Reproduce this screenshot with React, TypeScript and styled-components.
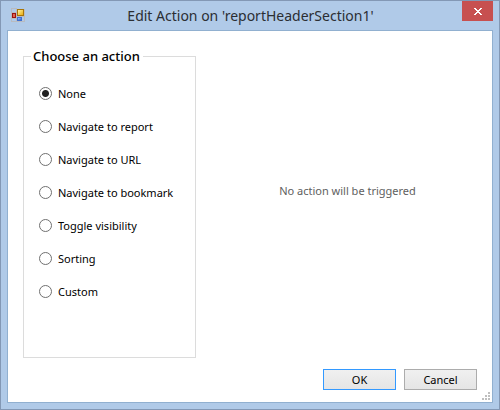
import React, { useState } from "react";
import styled, { createGlobalStyle } from "styled-components";

const GlobalStyle = createGlobalStyle`
  *, *::before, *::after { box-sizing: border-box; }
  body {
    margin: 0;
    color: #000;
    font: 11px/16px "Noto Sans", "Open Sans", sans-serif;
  }
`;

const Window = styled.div`
  display: flex;
  flex-direction: column;
  min-height: 100vh;
  padding: 0 6px 6px;
  border: 1px solid #8398b5;
  background: #b0cae8;
`;

const TitleBar = styled.header`
  display: grid;
  grid-template-columns: 32px 1fr 31px;
  align-items: start;
  height: 29px;
`;

const AppIcon = styled.svg`
  display: block;
  width: 14px;
  height: 14px;
  margin: 7px 0 0 4px;
`;

const Title = styled.h1`
  margin: 0;
  color: #2b2e33;
  font-size: 14px;
  font-weight: 400;
  line-height: 29px;
  text-align: center;
  white-space: nowrap;
`;

const CloseButton = styled.button`
  display: flex;
  align-items: center;
  justify-content: center;
  width: 31px;
  height: 20px;
  padding: 0;
  border: 0;
  background: #c75050;
`;

const Content = styled.form`
  position: relative;
  display: flex;
  flex: 1;
  flex-direction: column;
  gap: 11px;
  padding: 15px 15px 12px;
  border: 1px solid #91b0d0;
  background: #fff;
`;

const Panels = styled.main`
  display: flex;
  flex: 1;
  gap: 22px;
`;

const ActionGroup = styled.fieldset`
  flex: 0 0 173px;
  min-width: 0;
  margin: 0;
  padding: 11px 15px;
  border: 1px solid #dcdcdc;
`;

const Legend = styled.legend`
  margin-left: -8px;
  padding: 0 3px 0 2px;
  font-size: 13px;
  font-weight: 500;
  line-height: 20px;
`;

const Option = styled.label`
  display: flex;
  align-items: center;
  gap: 6px;
  height: 33px;
  white-space: nowrap;
`;

const Radio = styled.input`
  flex: none;
  appearance: none;
  width: 13px;
  height: 13px;
  margin: 0;
  border: 1px solid #707070;
  border-radius: 50%;
  background: #fff;

  &:checked {
    background: radial-gradient(circle, #212121 3px, #fff 4px);
  }
`;

const Message = styled.p`
  display: flex;
  flex: 1;
  align-items: center;
  justify-content: center;
  margin: 0;
  padding-bottom: 22px;
  color: #606060;
`;

const Footer = styled.footer`
  display: flex;
  justify-content: flex-end;
  gap: 8px;
`;

const DialogButton = styled.button<{ $primary?: boolean }>`
  width: 73px;
  height: 21px;
  padding: 0;
  border: 1px solid ${(p) => (p.$primary ? "#3399ff" : "#acacac")};
  background: linear-gradient(#f0f0f0, #e5e5e5);
  color: #000;
  font: inherit;
`;

const ResizeGrip = styled.svg`
  position: absolute;
  right: 2px;
  bottom: 2px;
  width: 8px;
  height: 8px;
  fill: #bfbfbf;
`;

const actions = [
  "None",
  "Navigate to report",
  "Navigate to URL",
  "Navigate to bookmark",
  "Toggle visibility",
  "Sorting",
  "Custom",
];

export default function App() {
  const [selected, setSelected] = useState("None");

  return (
    <>
      <GlobalStyle />
      <Window>
        <TitleBar>
          <AppIcon viewBox="0 0 14 14" shapeRendering="crispEdges" aria-hidden="true">
            <defs>
              <linearGradient id="gold" x1="0" y1="0" x2="1" y2="1">
                <stop offset="0" stopColor="#fff3a0" />
                <stop offset="1" stopColor="#e8ac10" />
              </linearGradient>
              <linearGradient id="blue" x1="0" y1="0" x2="1" y2="1">
                <stop offset="0" stopColor="#9cc4ff" />
                <stop offset="1" stopColor="#2e62d0" />
              </linearGradient>
            </defs>
            <path d="M5.5 .5H.5v13h13V.5M5.5 .5v13M.5 4.5h5M.5 10.5h5M5.5 8.5h8" fill="none" stroke="#b9bbc0" />
            <rect x="6" y="1" width="7" height="7" fill="#a87508" />
            <rect x="7" y="2" width="5" height="5" fill="url(#gold)" />
            <rect x="1" y="5" width="4" height="5" fill="#9c1310" />
            <rect x="2" y="6" width="2" height="3" fill="#df6550" />
            <rect x="6" y="9" width="5" height="4" fill="#3f6fd0" />
            <rect x="7" y="10" width="3" height="2" fill="url(#blue)" />
          </AppIcon>
          <Title>Edit Action on 'reportHeaderSection1'</Title>
          <CloseButton type="button" aria-label="Close">
            <svg width="8" height="7" viewBox="0 0 8 7" fill="#fff" shapeRendering="crispEdges" aria-hidden="true">
              <path d="M0 0h2v1h1v1h2V1h1V0h2v1H7v1H6v1H5v1h1v1h1v1h1v1H6V6H5V5H3v1H2v1H0V6h1V5h1V4h1V3H2V2H1V1H0z" />
            </svg>
          </CloseButton>
        </TitleBar>
        <Content onSubmit={(e) => e.preventDefault()}>
          <Panels>
            <ActionGroup>
              <Legend>Choose an action</Legend>
              {actions.map((action) => (
                <Option key={action}>
                  <Radio
                    type="radio"
                    name="action"
                    value={action}
                    checked={selected === action}
                    onChange={() => setSelected(action)}
                  />
                  {action}
                </Option>
              ))}
            </ActionGroup>
            <Message>No action will be triggered</Message>
          </Panels>
          <Footer>
            <DialogButton type="submit" $primary>OK</DialogButton>
            <DialogButton type="button">Cancel</DialogButton>
          </Footer>
          <ResizeGrip viewBox="0 0 8 8" shapeRendering="crispEdges" aria-hidden="true">
            <path d="M6 0h2v2H6zM3 3h2v2H3zM6 3h2v2H6zM0 6h2v2H0zM3 6h2v2H3zM6 6h2v2H6z" />
          </ResizeGrip>
        </Content>
      </Window>
    </>
  );
}
